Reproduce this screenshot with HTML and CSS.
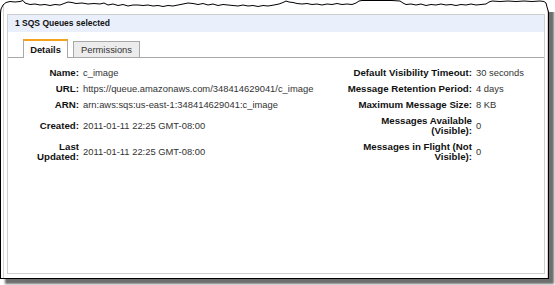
FILE: index.html
```html
<!DOCTYPE html>
<html lang="en">
<head>
  <meta charset="UTF-8">
  <title>SQS Queue Details</title>
  <link rel="stylesheet" href="styles.css">
</head>
<body>
  <div class="stage">
    <div class="shot">
      <div class="frame">
        <div class="panel">
          <div class="panel-head">1 SQS Queues selected</div>
          <div class="tabs">
            <div class="tab active">Details</div>
            <div class="tab">Permissions</div>
          </div>
          <div class="details">
            <div class="label">Name:</div>
            <div class="value">c_image</div>
            <div class="label">Default Visibility Timeout:</div>
            <div class="value">30 seconds</div>

            <div class="label">URL:</div>
            <div class="value">https://queue.amazonaws.com/348414629041/c_image</div>
            <div class="label">Message Retention Period:</div>
            <div class="value">4 days</div>

            <div class="label">ARN:</div>
            <div class="value">arn:aws:sqs:us-east-1:348414629041:c_image</div>
            <div class="label">Maximum Message Size:</div>
            <div class="value">8 KB</div>

            <div class="label">Created:</div>
            <div class="value">2011-01-11 22:25 GMT-08:00</div>
            <div class="label">Messages Available (Visible):</div>
            <div class="value">0</div>

            <div class="label">Last Updated:</div>
            <div class="value">2011-01-11 22:25 GMT-08:00</div>
            <div class="label">Messages in Flight (Not Visible):</div>
            <div class="value">0</div>
          </div>
        </div>
      </div>
    </div>
    <!-- torn top edge of the screenshot -->
    <svg class="torn" width="555" height="14" viewBox="0 0 555 14">
      <polygon fill="#fff" points="0,0 555,0 555,12 548.5,12 547,7 546,3 544,1.5 540,1 532,1.5 524,1 516,1.5 508,1 500,1.5 492,1 489,2 486,4 481,4.5 476,5 471,4 466,5 461,4.5 456,5.5 451,4.5 446,5 441,4 436,5 431,4.5 426,5.5 421,4 416,5 411,4 406,4.5 403,3 400,1 392,0.5 382,0.5 372,0.5 362,0.5 359,1 356,3 352,4.5 347,4 342,4.5 337,3.5 332,4.5 327,4 322,5 317,4 312,4.5 307,3.5 302,4 297,3.5 293,2.5 289,2 286,1 283,2.5 279,4 274,5 268,6 263,5.5 258,6.5 253,5.5 248,6 243,5 238,6 233,5.5 228,5 223,4.5 218,5.5 213,4 208,5 203,3.5 198,4.5 193,3.5 188,3 183,4 178,5 173,6 168,5.5 163,6.5 158,5.5 153,6 148,5 143,5.5 138,5 133,5 128,6 123,4.5 118,5.5 113,4 108,5 104,3 100,4 94,3.5 88,4 82,3 76,3.5 72,2.5 68,2 64,3.5 60,5 55,4.5 50,5.5 45,4.5 40,5 35,4 30,4.5 25,3 23,0.5 20,1.5 15,2 10,1.5 6,2.5 3,5 1,9 0.5,13 0,13"/>
      <polyline fill="none" stroke="#000" stroke-width="1" stroke-linejoin="round" points="548.5,12 547,7 546,3 544,1.5 540,1 532,1.5 524,1 516,1.5 508,1 500,1.5 492,1 489,2 486,4 481,4.5 476,5 471,4 466,5 461,4.5 456,5.5 451,4.5 446,5 441,4 436,5 431,4.5 426,5.5 421,4 416,5 411,4 406,4.5 403,3 400,1 392,0.5 382,0.5 372,0.5 362,0.5 359,1 356,3 352,4.5 347,4 342,4.5 337,3.5 332,4.5 327,4 322,5 317,4 312,4.5 307,3.5 302,4 297,3.5 293,2.5 289,2 286,1 283,2.5 279,4 274,5 268,6 263,5.5 258,6.5 253,5.5 248,6 243,5 238,6 233,5.5 228,5 223,4.5 218,5.5 213,4 208,5 203,3.5 198,4.5 193,3.5 188,3 183,4 178,5 173,6 168,5.5 163,6.5 158,5.5 153,6 148,5 143,5.5 138,5 133,5 128,6 123,4.5 118,5.5 113,4 108,5 104,3 100,4 94,3.5 88,4 82,3 76,3.5 72,2.5 68,2 64,3.5 60,5 55,4.5 50,5.5 45,4.5 40,5 35,4 30,4.5 25,3 23,0.5 20,1.5 15,2 10,1.5 6,2.5 3,5 1,9 0.5,13"/>
    </svg>
  </div>
</body>
</html>
```

FILE: styles.css
```css
body {
  margin: 0;
  background: #fff;
  font-family: "Liberation Sans", Arial, sans-serif;
  color: #222;
}

.stage {
  position: relative;
  width: 555px;
  height: 285px;
}

.shot {
  display: flex;
  flex-direction: column;
  width: 549px;
  height: 279px;
  box-sizing: border-box;
  border: 1px solid #000;
  border-top: none;
  background: #fff;
  box-shadow: 5px 5px 2px #6e6e6e;
}

.frame {
  flex: 1;
  display: flex;
  flex-direction: column;
  margin-left: 2px;
  border-left: 1px solid #d4d4d4;
  border-right: 1px solid #d4d4d4;
}

.panel {
  flex: 1;
  margin: 14px 2px 4px 3px;
  border: 1px solid #cfcfcf;
  background: #fff;
}

.panel-head {
  height: 17px;
  line-height: 17px;
  padding-left: 7px;
  background: #e9f0fb;
  font-size: 8.5px;
  font-weight: bold;
  color: #111;
}

.tabs {
  display: flex;
  align-items: flex-end;
  gap: 5px;
  padding: 7px 0 0 15px;
  border-bottom: 1px solid #a8a8a8;
}

.tab {
  box-sizing: border-box;
  height: 16px;
  line-height: 15px;
  width: 67px;
  text-align: center;
  font-size: 9.4px;
  color: #333;
  background: #ececec;
  border: 1px solid #a8a8a8;
  border-bottom: none;
}

.tab.active {
  width: 45px;
  height: 19px;
  line-height: 17px;
  margin-bottom: -1px;
  background: #fff;
  border-top: 2px solid #f5a21e;
  font-weight: bold;
  color: #111;
}

.details {
  display: grid;
  grid-template-columns: 48px 260px 125px 1fr;
  column-gap: 4px;
  align-items: center;
  margin: 7px 0 0 23px;
}

.label,
.value {
  padding: 3px 0;
  line-height: 10px;
}

.label {
  text-align: right;
  font-size: 9.7px;
  font-weight: bold;
  color: #111;
}

.value {
  font-size: 9.4px;
  color: #333;
  white-space: nowrap;
}

.torn {
  position: absolute;
  top: 0;
  left: 0;
}
```
